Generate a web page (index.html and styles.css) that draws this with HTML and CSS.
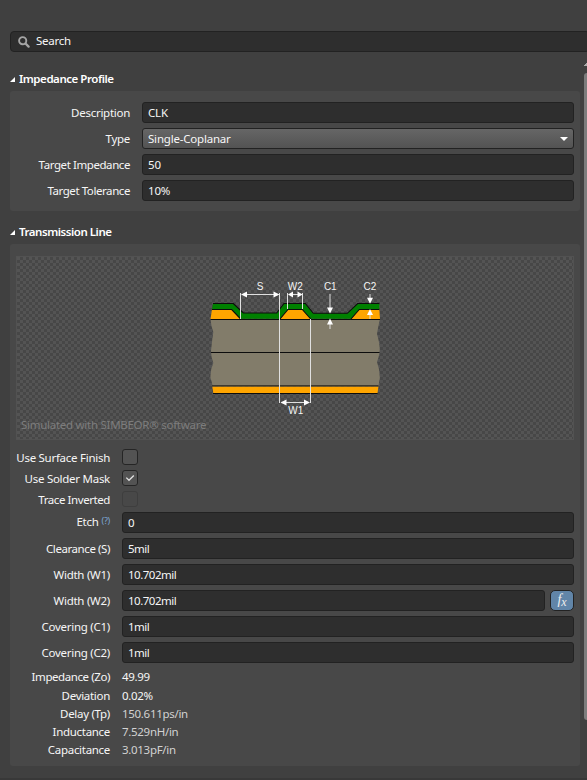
FILE: index.html
```html
<!DOCTYPE html>
<html lang="en">
<head>
<meta charset="utf-8">
<title>Impedance Profile</title>
<link rel="stylesheet" href="styles.css">
</head>
<body>
<main class="inspector">
  <div class="search">
    <svg class="search-icon" width="12" height="12" viewBox="0 0 12 12"><circle cx="4.7" cy="4.7" r="3.6" fill="none" stroke="#a5a5a5" stroke-width="1.9"/><path d="M7.5 7.5 10.6 10.6" stroke="#a5a5a5" stroke-width="2.3" stroke-linecap="round"/></svg>
    <span>Search</span>
  </div>
  <div class="scroll-rail"><span class="scroll-arrow"></span><span class="scroll-thumb"></span></div>

  <h2 class="heading"><svg width="5" height="5" viewBox="0 0 5 5"><path d="M5 0V5H0Z" fill="#fff"/></svg>Impedance Profile</h2>
  <section class="panel profile">
    <div class="row"><label>Description</label><div class="field">CLK</div></div>
    <div class="row"><label>Type</label><div class="field select">Single-Coplanar<svg width="8" height="4" viewBox="0 0 8 4"><path d="M0 0H8L4 4Z" fill="#fff"/></svg></div></div>
    <div class="row"><label class="tight">Target Impedance</label><div class="field">50</div></div>
    <div class="row"><label class="tight">Target Tolerance</label><div class="field">10%</div></div>
  </section>

  <h2 class="heading second"><svg width="5" height="5" viewBox="0 0 5 5"><path d="M5 0V5H0Z" fill="#fff"/></svg>Transmission Line</h2>
  <section class="panel line">
    <div class="preview">
      <svg class="diagram" width="558" height="184" viewBox="16 256 558 184">
        <defs>
          <pattern id="checks" x="17" y="257" width="6" height="6" patternUnits="userSpaceOnUse"><path d="M0 0h3v3h-3ZM3 3h3v3h-3Z" fill="#545454" shape-rendering="crispEdges"/></pattern>
        </defs>
        <rect x="16" y="256" width="558" height="184" fill="#474747"/>
        <rect x="16" y="256" width="558" height="184" fill="url(#checks)"/>
        <rect x="16.5" y="256.5" width="557" height="183" fill="none" stroke="#525252"/>
        <path d="M210.5 319Q211 326 213.3 332Q212 341 211 351Q211 357 213.3 363Q210 370 210.5 378Q212 382 212.5 386H378.5L379.8 378Q380 370 377 362Q379 357 379.7 351Q380 344 377 334Q378 327 380 319Z" fill="#827c6a"/>
        <path d="M212 309.3H231.7L240.7 319H210.5ZM288 309.3H302.3L310.7 319H280ZM359.3 309.3H379.3L380 319H351ZM212.3 386.5H378.5L377.5 393H213.3Z" fill="#ffa500"/>
        <path d="M213 303.5H233.3L243.3 313H276.7L284 303.5H305.3L313.3 313.3H347.3L357.7 303.5H379.3V309.3H359.3L351 318.7H310.7L302.3 309.3H288L280 318.7H240.7L231.7 309.3H212Z" fill="#008000"/>
        <g fill="none" stroke="#0c0c0c" stroke-width="1.1">
          <path d="M213 303.5H233.3L243.3 313H276.7L284 303.5H305.3L313.3 313.3H347.3L357.7 303.5H379.3M212 309.5H231.7L240.7 319M280 319L288 309.5H302.3L310.7 319M351 319L359.3 309.5H379.3"/>
          <path d="M210.5 319.5H380M211 352.5H379.5M213 393.5H377.5"/>
          <path d="M212 385.8H378.5" stroke="#3b3932" stroke-width="1.5"/>
        </g>
        <g stroke="#e0e0e0" stroke-width="1">
          <path d="M240.5 293V319M279.5 293V403M287.5 293V309M302.5 293V309M310.5 319V403M244 294.5H277M290 294.5H300M284 402.5H307M330 294V310M330 329V321M370 294V300M370 319V312"/>
        </g>
        <path d="M241 294.5l6-3v6ZM279.5 294.5l-6-3v6ZM288 294.5l5-3v6ZM302.5 294.5l-5-3v6ZM280.5 402.5l6-3v6ZM310 402.5l-6-3v6ZM330 313.5l-3-6h6ZM330 318.5l-3 6h6ZM370 303.7l-3-6h6ZM370 309l-3 6h6Z" fill="#fff"/>
        <g class="dimension-text">
          <text x="260" y="290">S</text><text x="295.3" y="290">W2</text><text x="330.3" y="290">C1</text><text x="370" y="290">C2</text><text x="295.8" y="413.5">W1</text>
        </g>
      </svg>
      <span class="credit">Simulated with SIMBEOR® software</span>
    </div>
    <div class="checks">
      <div class="row"><label>Use Surface Finish</label><span class="box"></span></div>
      <div class="row"><label>Use Solder Mask</label><span class="box"><svg width="14" height="14" viewBox="0 0 14 14"><path d="M3.3 6.6 6 9.3 10.8 4.5" fill="none" stroke="#e2e2e2" stroke-width="1.3"/></svg></span></div>
      <div class="row"><label class="tight">Trace Inverted</label><span class="box disabled"></span></div>
    </div>
    <div class="values">
      <div class="row"><label>Etch<span class="hint">(?)</span></label><div class="field">0</div></div>
      <div class="row"><label class="tight">Clearance (S)</label><div class="field numeric">5mil</div></div>
      <div class="row"><label>Width (W1)</label><div class="field numeric">10.702mil</div></div>
      <div class="row"><label>Width (W2)</label><div class="field numeric">10.702mil</div><button class="formula"><i>f</i><i class="sub">x</i></button></div>
      <div class="row"><label>Covering (C1)</label><div class="field numeric">1mil</div></div>
      <div class="row"><label>Covering (C2)</label><div class="field numeric">1mil</div></div>
    </div>
    <div class="results">
      <div class="row first"><label class="tight">Impedance (Zo)</label><span>49.99</span></div>
      <div class="row"><label>Deviation</label><span>0.02%</span></div>
      <div class="row"><label>Delay (Tp)</label><span class="muted">150.611ps/in</span></div>
      <div class="row"><label>Inductance</label><span class="muted">7.529nH/in</span></div>
      <div class="row"><label>Capacitance</label><span class="muted">3.013pF/in</span></div>
    </div>
  </section>
</main>
</body>
</html>
```
FILE: styles.css
```css
* { box-sizing: border-box; }
body {
  margin: 0;
  background: #404040;
  color: #f6f6f6;
  font: 11.5px/16px "Noto Sans", "Open Sans", sans-serif;
  letter-spacing: -0.27px;
}
.inspector {
  position: relative;
  width: 587px;
  height: 780px;
  padding: 31px 0 0 10px;
  overflow: hidden;
  border-bottom: 2px solid #383838;
}
.search {
  display: flex;
  align-items: center;
  gap: 6px;
  width: 580px;
  height: 21px;
  padding-left: 7px;
  background: #2e2e2e;
  border: 1px solid #222;
  border-radius: 4px;
}
.search span { position: relative; top: -1px; }
.scroll-rail {
  position: absolute;
  top: 62px;
  right: 0;
  width: 3px;
  overflow: hidden;
}
.scroll-arrow {
  display: block;
  width: 3px;
  height: 4px;
  background: linear-gradient(to bottom right, transparent 50%, #aaa 50%);
}
.scroll-thumb {
  display: block;
  width: 8px;
  height: 647px;
  margin-top: 7px;
  background: #7c7c7c;
  border-radius: 3px;
}
.heading {
  display: flex;
  align-items: center;
  gap: 4px;
  height: 16px;
  margin: 19px 0 4px;
  font-size: 11.5px;
  font-weight: 600;
  line-height: 16px;
  letter-spacing: -0.46px;
  color: #fff;
}
.heading.second { margin: 13px 0 4px; }
.panel {
  width: 570px;
  background: #484848;
  border-radius: 3px;
}
.profile { height: 120px; padding: 11px 6px; }
.line { height: 522px; padding: 12px 6px; }
.row { display: flex; align-items: center; }
.row label { width: 94px; margin-right: 12px; text-align: right; white-space: nowrap; }
.row .tight { letter-spacing: -0.42px; }
.profile .row label { width: 114px; }
.profile .row, .values .row { height: 21px; margin-bottom: 5px; }
.field {
  flex: 1;
  height: 21px;
  padding: 1px 5px;
  line-height: 18px;
  letter-spacing: -0.2px;
  background: #2e2e2e;
  border: 1px solid #222;
  border-radius: 3px;
}
.field.numeric { letter-spacing: -0.5px; }
.select {
  display: flex;
  align-items: center;
  justify-content: space-between;
  background: linear-gradient(#666, #535353);
}
.preview { position: relative; height: 184px; }
.diagram { display: block; letter-spacing: 0; }
.dimension-text {
  font: 10px "Liberation Sans", Arial, sans-serif;
  fill: #f4f4f4;
  text-anchor: middle;
}
.credit {
  position: absolute;
  left: 5px;
  bottom: 7px;
  color: #7d7d7d;
}
.checks { padding-top: 9px; }
.checks .row { height: 16px; margin-bottom: 5px; }
.checks label { position: relative; top: 1px; }
.box {
  width: 16px;
  height: 16px;
  background: #535353;
  border: 1px solid #252525;
  border-radius: 3px;
}
.box svg { display: block; }
.box.disabled { background: #484848; border-color: #3e3e3e; }
.hint {
  position: relative;
  top: -2px;
  margin-left: 3px;
  color: #7da7d4;
  font-size: 9px;
}
.formula {
  display: flex;
  align-items: center;
  justify-content: center;
  width: 24px;
  height: 21px;
  margin-left: 5px;
  padding: 0 0 2px;
  background: #6185a8;
  border: 1px solid #222;
  border-radius: 5px;
  color: #eee;
  font: 14px/16px "Liberation Serif", serif;
}
.formula .sub { position: relative; top: 2px; font-size: 12px; }
.results { letter-spacing: -0.3px; }
.results .row { height: 18px; }
.results .row.first { height: 19px; }
.results .row:first-child { position: relative; top: -1px; }
.results .muted { color: #d2d2d2; }
```
